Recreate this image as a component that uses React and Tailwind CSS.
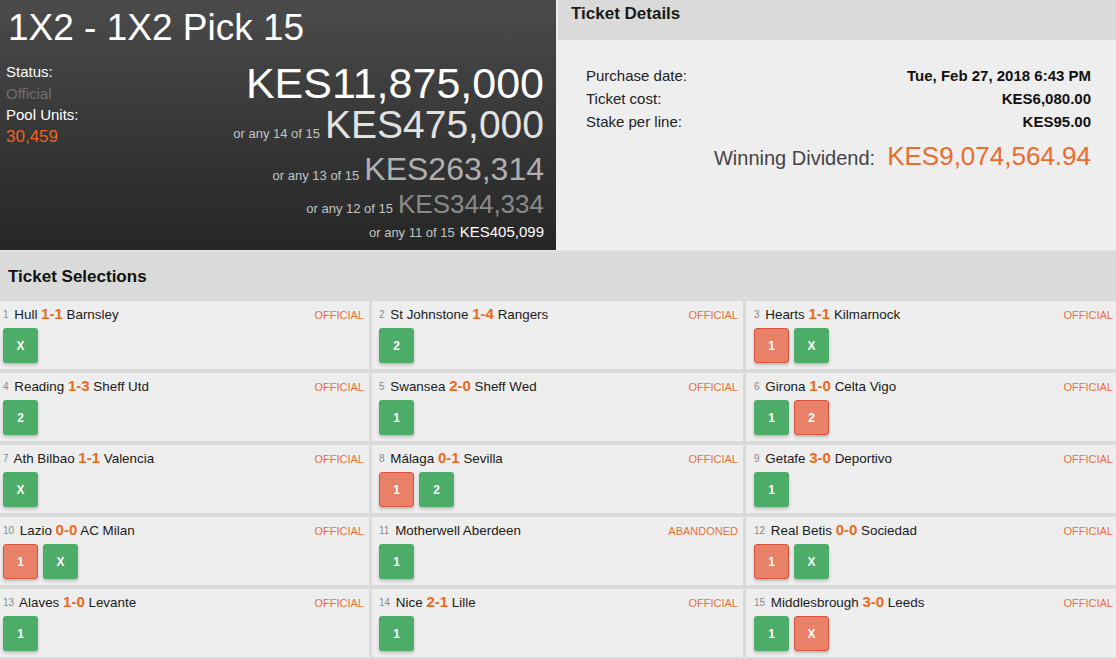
const selections = [
  { n: 1, home: 'Hull', score: '1-1', away: 'Barnsley', status: 'OFFICIAL', picks: [['X', 'win']] },
  { n: 2, home: 'St Johnstone', score: '1-4', away: 'Rangers', status: 'OFFICIAL', picks: [['2', 'win']] },
  { n: 3, home: 'Hearts', score: '1-1', away: 'Kilmarnock', status: 'OFFICIAL', picks: [['1', 'lose'], ['X', 'win']] },
  { n: 4, home: 'Reading', score: '1-3', away: 'Sheff Utd', status: 'OFFICIAL', picks: [['2', 'win']] },
  { n: 5, home: 'Swansea', score: '2-0', away: 'Sheff Wed', status: 'OFFICIAL', picks: [['1', 'win']] },
  { n: 6, home: 'Girona', score: '1-0', away: 'Celta Vigo', status: 'OFFICIAL', picks: [['1', 'win'], ['2', 'lose']] },
  { n: 7, home: 'Ath Bilbao', score: '1-1', away: 'Valencia', status: 'OFFICIAL', picks: [['X', 'win']] },
  { n: 8, home: 'Málaga', score: '0-1', away: 'Sevilla', status: 'OFFICIAL', picks: [['1', 'lose'], ['2', 'win']] },
  { n: 9, home: 'Getafe', score: '3-0', away: 'Deportivo', status: 'OFFICIAL', picks: [['1', 'win']] },
  { n: 10, home: 'Lazio', score: '0-0', away: 'AC Milan', status: 'OFFICIAL', picks: [['1', 'lose'], ['X', 'win']] },
  { n: 11, home: 'Motherwell', score: null, away: 'Aberdeen', status: 'ABANDONED', picks: [['1', 'win']] },
  { n: 12, home: 'Real Betis', score: '0-0', away: 'Sociedad', status: 'OFFICIAL', picks: [['1', 'lose'], ['X', 'win']] },
  { n: 13, home: 'Alaves', score: '1-0', away: 'Levante', status: 'OFFICIAL', picks: [['1', 'win']] },
  { n: 14, home: 'Nice', score: '2-1', away: 'Lille', status: 'OFFICIAL', picks: [['1', 'win']] },
  { n: 15, home: 'Middlesbrough', score: '3-0', away: 'Leeds', status: 'OFFICIAL', picks: [['1', 'win'], ['X', 'lose']] },
];

const colPad = ['pl-[3px] pr-[5px]', 'pl-[7px] pr-[5px]', 'pl-[8px] pr-[3px]'];

function Pick({ label, result }) {
  return (
    <div
      className={`w-[35px] h-[35px] rounded-[3px] flex items-center justify-center text-white text-[12px] font-semibold shadow-[0_2px_3px_rgba(0,0,0,0.22)] ${
        result === 'win' ? 'bg-[#4cac68]' : 'bg-[#e98169] border border-[#d9533f]'
      }`}
    >
      {label}
    </div>
  );
}

function SelectionCard({ sel, col }) {
  return (
    <div className={`h-[68px] bg-[#eeeeee] pt-[4px] ${colPad[col]}`}>
      <div className="flex items-center justify-between h-[20px]">
        <div className="text-[13.4px] leading-[20px] text-[#1a1a1a] whitespace-nowrap">
          <span className="relative -top-[1px] text-[10px] leading-none text-[#888] mr-[2px]">{sel.n}</span>{' '}
          {sel.home}{' '}
          {sel.score && (
            <>
              <span className="text-[15px] leading-none font-bold text-[#ec6a1e]">{sel.score}</span>{' '}
            </>
          )}
          {sel.away}
        </div>
        <span className="text-[11px] text-[#e8703a]">{sel.status}</span>
      </div>
      <div className="flex gap-[5px] mt-[3px]">
        {sel.picks.map(([label, result]) => (
          <Pick key={label} label={label} result={result} />
        ))}
      </div>
    </div>
  );
}

function Amount({ small, value, size, color, mt }) {
  return (
    <div className={`leading-none whitespace-nowrap ${mt}`}>
      {small && <span className="text-[13px] text-[#c4c4c4] mr-[5px]">{small}</span>}
      <span className={`${size} ${color}`}>{value}</span>
    </div>
  );
}

export default function App() {
  return (
    <div className="w-[1116px] h-[659px] overflow-hidden bg-[#dadada] font-['Liberation_Sans',Arial,sans-serif]">
      {/* top: pool summary + ticket details */}
      <div className="flex h-[250px] bg-[#eeeeee]">
        <div className="w-[556px] h-full bg-linear-to-b from-[#4b4b4b] to-[#262626] text-white">
          <div className="pt-[7px] pl-[8px] text-[37px] leading-[42px]">1X2 - 1X2 Pick 15</div>
          <div className="flex justify-between">
            <div className="pl-[6px] pt-[12px] text-[15px] leading-[21.7px]">
              <div>Status:</div>
              <div className="text-[#6f6f6f]">Official</div>
              <div>Pool Units:</div>
              <div className="text-[17px] text-[#ec6320]">30,459</div>
            </div>
            <div className="pr-[12px] pt-[13px] flex flex-col items-end">
              <Amount value="KES11,875,000" size="text-[43px]" color="text-white" mt="" />
              <Amount small="or any 14 of 15" value="KES475,000" size="text-[39px]" color="text-[#e2e2e2]" mt="mt-0" />
              <Amount small="or any 13 of 15" value="KES263,314" size="text-[32px]" color="text-[#b0b0b0]" mt="mt-[9px]" />
              <Amount small="or any 12 of 15" value="KES344,334" size="text-[26px]" color="text-[#8a8a8a]" mt="mt-[6px]" />
              <Amount small="or any 11 of 15" value="KES405,099" size="text-[15px]" color="text-white" mt="mt-[7px]" />
            </div>
          </div>
        </div>
        <div className="flex-1 ml-[2px] flex flex-col">
          <div className="h-[40px] bg-[#dadada] pt-[4px] pl-[13px] text-[17px] leading-[20px] font-bold text-[#1a1a1a]">
            Ticket Details
          </div>
          <div className="flex-1 bg-[#eeeeee] pt-[24px] pl-[28px] pr-[25px] text-[#222]">
            {[
              ['Purchase date:', 'Tue, Feb 27, 2018 6:43 PM'],
              ['Ticket cost:', 'KES6,080.00'],
              ['Stake per line:', 'KES95.00'],
            ].map(([label, value]) => (
              <div key={label} className="flex justify-between leading-[23px]">
                <span className="text-[15px]">{label}</span>
                <span className="text-[15px] font-bold text-[#111]">{value}</span>
              </div>
            ))}
            <div className="mt-[6px] flex justify-end items-baseline leading-[34px]">
              <span className="text-[20px] text-[#444]">Winning Dividend:</span>
              <span className="text-[26px] text-[#ec6a2c] ml-[12px]">KES9,074,564.94</span>
            </div>
          </div>
        </div>
      </div>

      {/* selections */}
      <div className="h-[50px] pt-[16px] pl-[8px] text-[17px] leading-[20px] font-bold text-[#111] border-t-[1px] border-[#e6e6e6]">
        Ticket Selections
      </div>
      <div className="grid grid-cols-[369px_371px_1fr] gap-x-[3px] gap-y-[4px] pt-[1px]">
        {selections.map((sel, i) => (
          <SelectionCard key={sel.n} sel={sel} col={i % 3} />
        ))}
      </div>
    </div>
  );
}
